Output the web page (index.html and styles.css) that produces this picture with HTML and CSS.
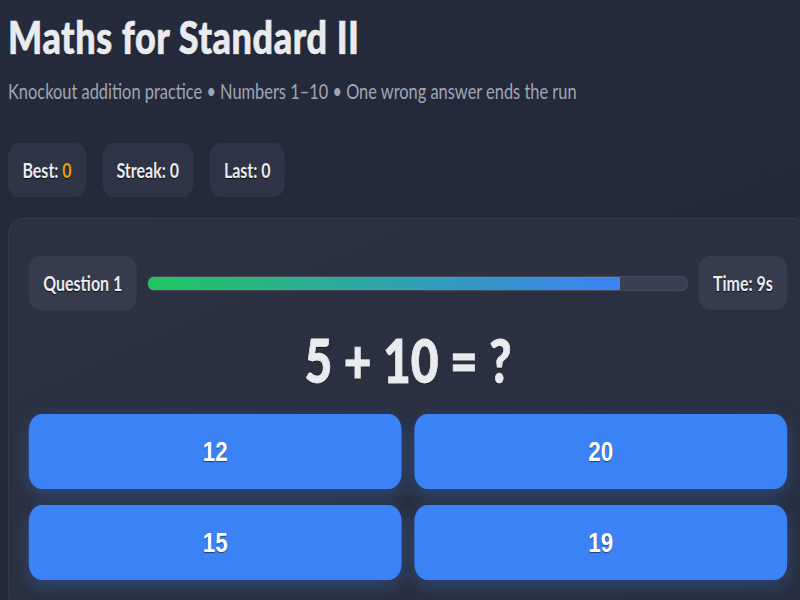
FILE: index.html
```html
<!DOCTYPE html>
<html lang="en">
<head>
  <meta charset="UTF-8">
  <meta name="viewport" content="width=device-width, initial-scale=1.0">
  <title>Maths for Standard II</title>
  <link rel="stylesheet" href="styles.css">
</head>
<body>
  <div class="page">
    <h1>Maths for Standard II</h1>
    <p class="subtitle">Knockout addition practice • Numbers 1–10 • One wrong answer ends the run</p>

    <div class="stats">
      <div class="stat">Best: <span class="best">0</span></div>
      <div class="stat">Streak: <span>0</span></div>
      <div class="stat">Last: <span>0</span></div>
    </div>

    <div class="card">
      <div class="quiz-head">
        <div class="pill">Question 1</div>
        <div class="timer-bar">
          <div class="timer-fill" style="width: 87.5%"></div>
        </div>
        <div class="pill">Time: 9s</div>
      </div>

      <div class="question">5 + 10 = ?</div>

      <div class="answers">
        <button class="answer">12</button>
        <button class="answer">20</button>
        <button class="answer">15</button>
        <button class="answer">19</button>
      </div>
    </div>
  </div>
</body>
</html>
```

FILE: styles.css
```css
html, body {
  margin: 0;
  overflow: hidden;
}
body {
  min-height: 100vh;
  background: linear-gradient(160deg, #252b3b, #212737);
  font-family: Lato, "Open Sans", sans-serif;
  color: #e9ebf0;
}
.page {
  width: 1000px;
  padding: 10px;
  transform: scaleX(0.8);
  transform-origin: 0 0;
}
h1 {
  margin: 0;
  font-size: 45px;
  line-height: 54px;
  font-weight: 900;
  letter-spacing: 0.7px;
  -webkit-text-stroke: 0.7px currentColor;
  text-shadow: 0 1px 1px rgba(0, 0, 0, 0.8);
}
.subtitle {
  margin: 12px 0 0;
  font-size: 20.5px;
  line-height: 30px;
  color: #a0a6b3;
}
.stats {
  display: flex;
  gap: 20px;
  margin-top: 37px;
}
.stat {
  background: #2f3546;
  border-radius: 14px;
  padding: 15px 18px;
  font-size: 20px;
  line-height: 24px;
  font-weight: 700;
  text-shadow: 0 1px 1px rgba(0, 0, 0, 0.8);
}
.best {
  color: #f59e0b;
}
.card {
  margin-top: 21px;
  background: linear-gradient(160deg, #2c3242, #282e3e);
  border: 1px solid #383e4f;
  border-radius: 18px;
  padding: 37px 25px 30px;
}
.quiz-head {
  display: flex;
  align-items: center;
  gap: 13px;
}
.pill {
  background: #363c4c;
  border-radius: 14px;
  padding: 15px 18px;
  font-size: 20px;
  line-height: 24px;
  font-weight: 700;
  text-shadow: 0 1px 1px rgba(0, 0, 0, 0.8);
}
.timer-bar {
  flex: 1;
  height: 13px;
  background: #3a4051;
  border: 1px solid #484e5f;
  border-radius: 999px;
  overflow: hidden;
}
.timer-fill {
  height: 100%;
  background: linear-gradient(90deg, #22c55e, #3b82f6);
}
.question {
  margin: 14px 0 18px;
  text-align: center;
  font-size: 60px;
  line-height: 72px;
  font-weight: 900;
  -webkit-text-stroke: 0.8px currentColor;
  text-shadow: 0 1px 1px rgba(0, 0, 0, 0.8);
}
.answers {
  display: grid;
  grid-template-columns: 1fr 1fr;
  gap: 16px;
}
.answer {
  height: 75px;
  border: none;
  border-radius: 16px;
  background: #3b82f6;
  color: #fff;
  font-family: "Liberation Sans", Arial, sans-serif;
  font-size: 28px;
  font-weight: 700;
  text-shadow: 0 1px 1px rgba(0, 0, 0, 0.5);
  box-shadow: 0 6px 20px rgba(59, 130, 246, 0.3);
  cursor: pointer;
}
.answer:hover {
  background: #2f74e6;
}
```
